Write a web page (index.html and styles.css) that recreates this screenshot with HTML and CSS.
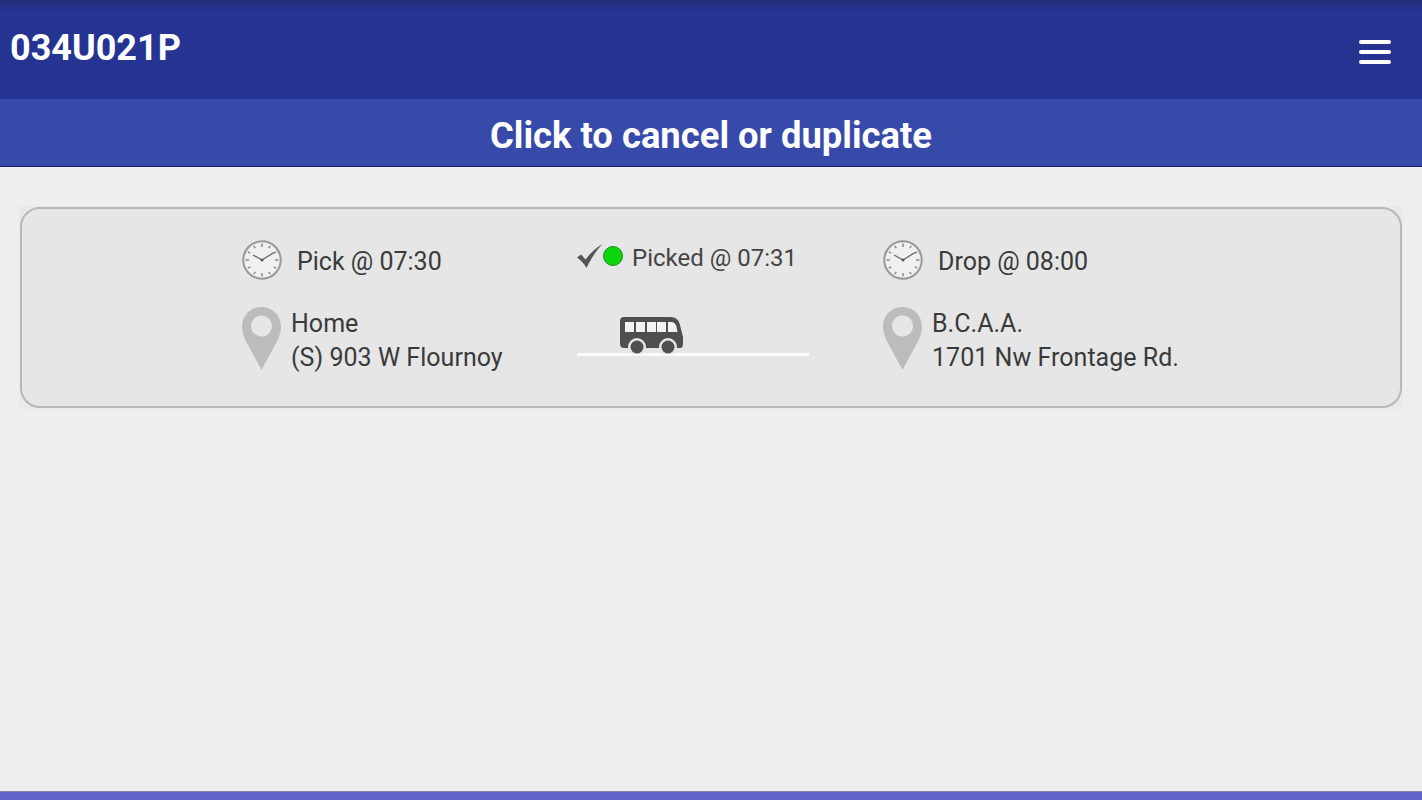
FILE: index.html
```html
<!DOCTYPE html>
<html lang="en">
<head>
    <meta charset="UTF-8">
    <title>034U021P</title>
    <link rel="stylesheet" href="styles.css">
</head>
<body>

<header class="top-bar">
    <h1 class="route-code">034U021P</h1>
    <svg class="menu-icon" viewBox="0 0 32 24" width="32" height="24">
        <rect x="0" y="0" width="32" height="4" rx="2"/>
        <rect x="0" y="10" width="32" height="4" rx="2"/>
        <rect x="0" y="20" width="32" height="4" rx="2"/>
    </svg>
</header>

<div class="sub-bar">Click to cancel or duplicate</div>

<main class="content">
    <div class="card-backing">
        <section class="trip-card">
            <!-- Pick up -->
            <div class="trip-col col-pick">
                <div class="time-row">
                    <svg class="clock-icon" viewBox="0 0 40 40" width="40" height="40">
                        <use href="#clock"/>
                    </svg>
                    <span class="time-label">Pick @ 07:30</span>
                </div>
                <div class="place-row">
                    <svg class="pin-icon" viewBox="0 0 40 63" width="40" height="63">
                        <use href="#pin"/>
                    </svg>
                    <div class="place-text">Home<br>(S) 903 W Flournoy</div>
                </div>
            </div>

            <!-- Status -->
            <div class="trip-col col-status">
                <div class="status-row">
                    <svg class="check-icon" viewBox="0 0 26 24" width="26" height="24">
                        <path d="M0 13.500 L4 10.500 L8.500 15.500 C13 9.500 18 4.500 25.500 0 C19 7 14 14.500 9.500 24 C7 19.500 3.500 16 0 13.500 Z"/>
                    </svg>
                    <span class="status-dot"></span>
                    <span class="status-label">Picked @ 07:31</span>
                </div>
                <div class="bus-track">
                    <svg class="bus-icon" viewBox="0 0 63 37" width="63" height="37">
                        <path class="bus-body" d="M4 0 H50 C56 0 59 3 60 8 L63 20 V27 C63 29.500 62 31 60 31 H4 C1.500 31 0 29.500 0 27 V4 C0 1.500 1.500 0 4 0 Z"/>
                        <rect class="bus-glass" x="5" y="5" width="9" height="10"/>
                        <rect class="bus-glass" x="16" y="5" width="9" height="10"/>
                        <rect class="bus-glass" x="27" y="5" width="9" height="10"/>
                        <rect class="bus-glass" x="37" y="5" width="9" height="10"/>
                        <path class="bus-glass" d="M48 5 H51 C54 5 56 7 56.500 10 L57.500 15 H48 Z"/>
                        <circle class="bus-arch" cx="17" cy="30" r="9"/>
                        <circle class="bus-arch" cx="48" cy="30" r="9"/>
                        <circle class="bus-body" cx="17" cy="30" r="6.500"/>
                        <circle class="bus-body" cx="48" cy="30" r="6.500"/>
                    </svg>
                </div>
            </div>

            <!-- Drop off -->
            <div class="trip-col col-drop">
                <div class="time-row">
                    <svg class="clock-icon" viewBox="0 0 40 40" width="40" height="40">
                        <use href="#clock"/>
                    </svg>
                    <span class="time-label">Drop @ 08:00</span>
                </div>
                <div class="place-row">
                    <svg class="pin-icon" viewBox="0 0 40 63" width="40" height="63">
                        <use href="#pin"/>
                    </svg>
                    <div class="place-text">B.C.A.A.<br>1701 Nw Frontage Rd.</div>
                </div>
            </div>
        </section>
    </div>
</main>

<footer class="bottom-bar"></footer>

<svg class="icon-defs" width="0" height="0">
    <defs>
        <g id="clock">
            <circle cx="20" cy="20" r="18.700" fill="#f0f0f0" stroke="#999" stroke-width="2"/>
            <g stroke="#8c8c8c" stroke-width="1.500">
                <path d="M20 3.500 V7 M20 33 V36.500 M3.500 20 H7 M33 20 H36.500"/>
                <path d="M28.200 5.800 L26.800 8.200 M34.200 11.800 L31.800 13.200 M34.200 28.200 L31.800 26.800 M28.200 34.200 L26.800 31.800"/>
                <path d="M11.800 5.800 L13.200 8.200 M5.800 11.800 L8.200 13.200 M5.800 28.200 L8.200 26.800 M11.800 34.200 L13.200 31.800"/>
            </g>
            <path d="M20 20 L11 15 M20 20 L32 12.500" stroke="#666" stroke-width="1.300" fill="none"/>
            <circle cx="20" cy="20" r="1.500" fill="#555"/>
        </g>
        <path id="pin" fill="#bcbcbc" fill-rule="evenodd" d="M19.500 0 C30.500 0 39 8.500 39 20 C39 26 36.500 32 33 38 L19.500 63 L6 38 C2.500 32 0 26 0 20 C0 8.500 8.500 0 19.500 0 Z M19.500 8.500 C13.700 8.500 9 13.200 9 19 C9 24.800 13.700 29.500 19.500 29.500 C25.300 29.500 30 24.800 30 19 C30 13.200 25.300 8.500 19.500 8.500 Z"/>
    </defs>
</svg>

</body>
</html>
```

FILE: styles.css
```css
* {
    margin: 0;
    padding: 0;
    box-sizing: border-box;
}

html, body {
    height: 100%;
}

body {
    font-family: 'Roboto', 'Liberation Sans', sans-serif;
    background-color: #eeeeee;
    color: #3a3a3a;
    display: flex;
    flex-direction: column;
    overflow: hidden;
}

/* Barra superior */
.top-bar {
    height: 99px;
    flex-shrink: 0;
    background: linear-gradient(#252f7c 0, #253391 12px, #253393 100%);
    display: flex;
    align-items: flex-start;
    justify-content: space-between;
    padding: 27px 31px 0 10px;
}

.route-code {
    font-size: 36px;
    line-height: 42px;
    font-weight: 700;
    color: #fff;
}

.menu-icon {
    fill: #fff;
    margin-top: 13px;
}

.sub-bar {
    height: 68px;
    flex-shrink: 0;
    background-color: #384aa9;
    border-bottom: 1px solid #14206f;
    color: #fff;
    font-size: 36.4px;
    font-weight: 700;
    line-height: 74px;
    text-align: center;
}

.content {
    flex: 1;
    padding: 39px 19px 0;
}

.card-backing {
    background-color: #e9e9e9;
    padding: 1px;
}

/* Cartao da viagem */
.trip-card {
    height: 201px;
    background-color: #e6e6e6;
    border: 2px solid #b8b8b8;
    border-radius: 20px;
    display: flex;
    padding: 31px 0 0 220px;
}

.trip-col {
    display: flex;
    flex-direction: column;
}

.col-pick {
    width: 335px;
}

.col-status {
    width: 306px;
}

.time-row {
    display: flex;
    align-items: center;
    height: 40px;
    margin-bottom: 27px;
}

.clock-icon {
    flex-shrink: 0;
    margin-right: 15px;
}

.time-label,
.place-text {
    font-size: 25px;
}

.time-label {
    margin-top: 2px;
}

.status-label {
    font-size: 24px;
    color: #444;
}

.place-row {
    display: flex;
}

.pin-icon {
    flex-shrink: 0;
    margin-right: 9px;
}

.place-text {
    line-height: 34px;
    letter-spacing: 0.03px;
}

/* Status e onibus */
.status-row {
    display: flex;
    align-items: center;
    height: 36px;
}

.check-icon {
    fill: #555;
    flex-shrink: 0;
    margin-top: -4px;
}

.status-dot {
    width: 20px;
    height: 20px;
    border-radius: 50%;
    background-color: #0ed60e;
    border: 1px solid #1d8a1d;
    margin-right: 9px;
    margin-top: -4px;
    flex-shrink: 0;
}

.bus-track {
    width: 232px;
    margin-top: 41px;
    border-bottom: 3px solid #fbfbfb;
    padding-left: 43px;
    height: 39px;
}

.bus-icon {
    display: block;
}

.bus-body {
    fill: #4f4f4f;
}

.bus-glass {
    fill: #f2f2f2;
}

.bus-arch {
    fill: #e6e6e6;
}

.icon-defs {
    position: absolute;
}

.bottom-bar {
    height: 9px;
    flex-shrink: 0;
    background-color: #5f62c6;
    border-top: 1px solid #8585a8;
}
```
